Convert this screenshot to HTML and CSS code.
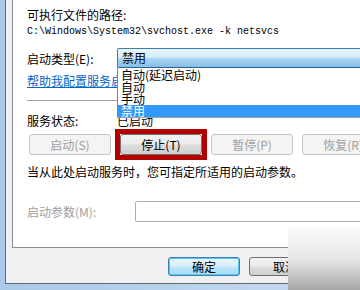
FILE: index.html
```html
<!DOCTYPE html>
<html lang="zh-CN">
<head>
  <meta charset="UTF-8" />
  <title>服务属性</title>
  <link rel="stylesheet" href="styles.css">
</head>
<body>
  <div class="window">
    <div class="dialog">
      <div class="panel">
        <div class="line">可执行文件的路径:</div>
        <div class="path">C:\Windows\System32\svchost.exe -k netsvcs</div>

        <div class="row type-row">
          <span class="row-label">启动类型(E):</span>
          <div class="select">
            <div class="select-box">禁用</div>
            <ul class="select-list">
              <li>自动(延迟启动)</li>
              <li>自动</li>
              <li>手动</li>
              <li class="selected">禁用</li>
            </ul>
          </div>
        </div>

        <a class="help-link" href="#">帮助我配置服务启动选项。</a>
        <div class="sep"></div>

        <div class="row status-row">
          <span class="row-label">服务状态:</span>
          <span>已启动</span>
        </div>

        <div class="buttons">
          <button class="btn disabled">启动(S)</button>
          <span class="mark"><button class="btn">停止(T)</button></span>
          <button class="btn disabled">暂停(P)</button>
          <button class="btn disabled">恢复(R)</button>
        </div>

        <p class="desc">当从此处启动服务时，您可指定所适用的启动参数。</p>

        <div class="row params-row">
          <span class="row-label muted">启动参数(M):</span>
          <div class="input"></div>
        </div>
      </div>

      <div class="footer">
        <button class="btn default">确定</button>
        <button class="btn">取消</button>
      </div>
    </div>
    <div class="corner"></div>
  </div>
</body>
</html>
```

FILE: styles.css
```css
body, html {
  margin: 0;
  padding: 0;
  background: #f0f0f0;
  font-family: "Noto Sans CJK SC", "Noto Sans", sans-serif;
  font-size: 12px;
  color: #000;
}
.window {
  position: relative;
  width: 360px;
  height: 290px;
  overflow: hidden;
  background: linear-gradient(to right, #aac8e8, #c9dcf0);
  padding-left: 5px;
  box-sizing: border-box;
}
.dialog {
  width: 460px;
  height: 284px;
  background: #f0f0f0;
  border-left: 1px solid #5e6a78;
  border-bottom: 1px solid #5e6a78;
  box-sizing: border-box;
  padding-left: 6px;
}
.panel {
  width: 440px;
  height: 248px;
  box-sizing: border-box;
  background: #fff;
  border-left: 1px solid #898c95;
  border-bottom: 1px solid #898c95;
  padding: 8px 0 0 14px;
}
.line {
  line-height: 14px;
}
.path {
  margin-top: 4px;
  font-family: "Liberation Mono", monospace;
  font-size: 10px;
  line-height: 12px;
}
.row {
  display: flex;
  align-items: center;
}
.row-label {
  width: 90px;
  flex: none;
}
.type-row {
  margin-top: 10px;
  height: 20px;
}
.select {
  position: relative;
  width: 300px;
  height: 20px;
}
.select-box {
  height: 20px;
  box-sizing: border-box;
  border: 1px solid #3c7fb1;
  border-bottom-color: #2c628b;
  border-radius: 2px;
  background: linear-gradient(#eaf6fd, #d6ecfa 45%, #a9d5f3 55%, #85c0e9);
  padding-left: 4px;
  line-height: 18px;
  box-shadow: 0 1px 0 #8a8a8a;
}
.select-list {
  position: absolute;
  top: 20px;
  left: 0;
  right: 0;
  margin: 0;
  padding: 1px 0 0;
  list-style: none;
  background: #fff;
  border-left: 1px solid #828282;
  border-bottom: 1px solid #a0a0a0;
  z-index: 2;
}
.select-list li {
  height: 12px;
  line-height: 12px;
  padding-left: 3px;
}
.select-list li.selected {
  background: #3399ff;
  color: #fff;
}
.help-link {
  display: block;
  margin-top: 6px;
  line-height: 14px;
  color: #0066cc;
  text-decoration: underline;
  white-space: nowrap;
}
.sep {
  margin-top: 12px;
  height: 1px;
  background: #a0a0a0;
}
.status-row {
  margin-top: 12px;
  height: 14px;
}
.buttons {
  display: flex;
  gap: 9px;
  margin-top: 7px;
  padding-left: 2px;
}
.btn {
  width: 82px;
  height: 21px;
  box-sizing: border-box;
  flex: none;
  font: inherit;
  line-height: 17px;
  padding: 0;
  border: 1px solid #707070;
  border-radius: 3px;
  background: linear-gradient(#f2f2f2, #ebebeb 45%, #dddddd 55%, #cfcfcf);
  color: #000;
}
.btn.disabled {
  border-color: #c4c4c4;
  background: #f4f4f4;
  color: #a0a0a0;
}
.mark {
  display: flex;
  margin: -5px;
  border: 5px solid #b20000;
}
.desc {
  margin: 10px 0 0;
  line-height: 14px;
}
.params-row {
  margin-top: 22px;
  height: 21px;
}
.muted {
  color: #a0a0a0;
}
.params-row .row-label {
  width: 108px;
}
.input {
  width: 300px;
  height: 21px;
  box-sizing: border-box;
  border: 1px solid #abadb3;
  border-radius: 2px;
  background: #fff;
}
.footer {
  display: flex;
  gap: 9px;
  padding: 9px 0 0 156px;
}
.footer .btn {
  width: 72px;
  height: 19px;
  line-height: 15px;
}
.footer .btn.default {
  border-color: #3c7fb1;
  box-shadow: inset 0 0 0 1px #5ac8f5;
  background: linear-gradient(#eaf6fd, #d9f0fc 45%, #bee6fd 55%, #a7d9f5);
}
.corner {
  position: absolute;
  left: 288px;
  top: 228px;
  width: 72px;
  height: 62px;
  background: linear-gradient(#fafafa, #e6e6e6 50%, #a8a8a8);
  z-index: 3;
}
```
